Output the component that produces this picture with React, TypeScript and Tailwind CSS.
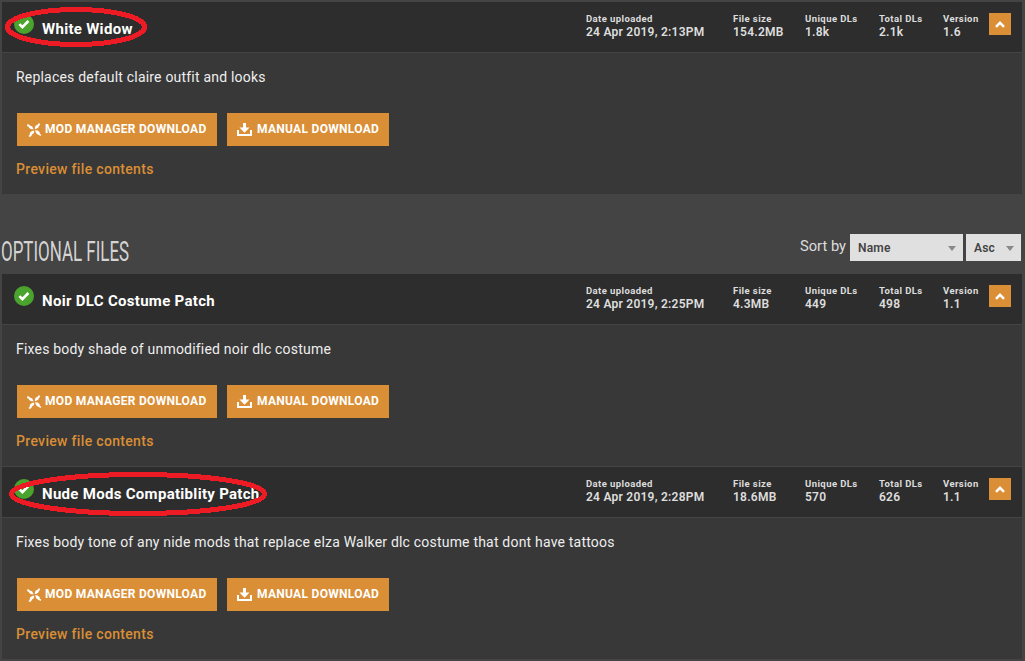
import React from "react";

interface ModFile {
	name: string;
	description: string;
	date: string;
	size: string;
	unique: string;
	total: string;
	version: string;
}

const mainFile: ModFile = {
	name: "White Widow",
	description: "Replaces default claire outfit and looks",
	date: "24 Apr 2019, 2:13PM",
	size: "154.2MB",
	unique: "1.8k",
	total: "2.1k",
	version: "1.6",
};

const optionalFiles: ModFile[] = [
	{
		name: "Noir DLC Costume Patch",
		description: "Fixes body shade of unmodified noir dlc costume",
		date: "24 Apr 2019, 2:25PM",
		size: "4.3MB",
		unique: "449",
		total: "498",
		version: "1.1",
	},
	{
		name: "Nude Mods Compatiblity Patch",
		description:
			"Fixes body tone of any nide mods that replace elza Walker dlc costume that dont have tattoos",
		date: "24 Apr 2019, 2:28PM",
		size: "18.6MB",
		unique: "570",
		total: "626",
		version: "1.1",
	},
];

const CheckIcon = () => (
	<svg className="size-5 mt-3 shrink-0" viewBox="0 0 20 20">
		<circle cx="10" cy="10" r="10" fill="#4aa32c" />
		<path d="M5.4 10.2l3 3L14.4 7" fill="none" stroke="#fff" strokeWidth="2.6" />
	</svg>
);

const ManagerIcon = () => (
	<svg className="w-[14px] h-[14px]" viewBox="0 0 14 14" fill="#fff">
		<path d="M0 1.6L1.5 1.2 3.2 2.7 5 3.2 6.6 6.2 4.6 6.2 2.4 5.2 2 3.9 0.4 3.2z" />
		<path d="M11.9 0L13 0.9 12.6 2.6 11.8 3.2 11.2 4.8 8.4 6.3 7.6 5.2 8.8 2.4 10.6 1.8z" />
		<path d="M6.2 7.4L7.3 8.2 6.6 10.6 5 11.4 4.4 13 2.9 14 1.4 12.9 2.6 12 3 9.6 4.4 8.6z" />
		<path d="M8 7.2L10.6 7.4 12.6 9 12.7 10.4 14 11.4 13.8 12.9 11.6 12 9.4 10.6z" />
	</svg>
);

const DownloadIcon = () => (
	<svg className="w-[15px] h-[13px]" viewBox="0 0 15 13" fill="#fff">
		<path d="M6 0h3v4.6h3.5L7.5 9.8 2.5 4.6H6z" />
		<path d="M0 7h2v4h11V7h2v6H0z" />
	</svg>
);

const Stat = ({
	label,
	value,
	className,
}: {
	label: string;
	value: string;
	className: string;
}) => (
	<div className={`${className} shrink-0 whitespace-nowrap text-[#ddd]`}>
		<p className="mt-[10px] text-[9.5px] leading-[13px] font-bold tracking-[0.42px]">
			{label}
		</p>
		<p className="mt-px text-[12px] leading-[13px] font-semibold tracking-[0.24px]">
			{value}
		</p>
	</div>
);

const FileEntry = ({ file }: { file: ModFile }) => (
	<div>
		<div className="flex h-[50px] bg-[#2d2d2d] pl-3">
			<CheckIcon />
			<h3 className="ml-2 mt-4 grow whitespace-nowrap text-[15px] leading-[22px] font-bold tracking-[0.3px] text-white">
				{file.name}
			</h3>
			<Stat label="Date uploaded" value={file.date} className="w-[147px]" />
			<Stat label="File size" value={file.size} className="w-[72px]" />
			<Stat label="Unique DLs" value={file.unique} className="w-[74px]" />
			<Stat label="Total DLs" value={file.total} className="w-[64px]" />
			<Stat label="Version" value={file.version} className="w-[46px]" />
			<button className="mr-[11px] mt-[11px] flex size-[22px] shrink-0 items-center justify-center bg-[#da8e35]">
				<svg className="w-[10px] h-[7px]" viewBox="0 0 10 7">
					<path d="M1 5.8l4-4 4 4" fill="none" stroke="#fff" strokeWidth="2.5" />
				</svg>
			</button>
		</div>
		<div className="h-[142px] border-t border-[#444] bg-[#383838] pl-[14px] pt-[14px]">
			<p className="text-[14px] leading-5 tracking-[0.2px] text-[#eee]">
				{file.description}
			</p>
			<div className="ml-px mt-[26px] flex gap-[10px] text-[12px] font-bold tracking-[0.3px] text-white whitespace-nowrap">
				<button className="flex h-[33px] w-[200px] items-center gap-1 bg-[#da8e35] pl-[10px]">
					<ManagerIcon />
					<span className="mb-0.5">MOD MANAGER DOWNLOAD</span>
				</button>
				<button className="flex h-[33px] w-[162px] items-center gap-[5px] bg-[#da8e35] pl-[10px]">
					<DownloadIcon />
					<span className="mb-0.5">MANUAL DOWNLOAD</span>
				</button>
			</div>
			<a className="mt-[13px] block text-[14px] leading-5 font-medium tracking-[0.32px] text-[#da8e35]">
				Preview file contents
			</a>
		</div>
	</div>
);

const Select = ({ value, className }: { value: string; className: string }) => (
	<div
		className={`${className} flex h-[27px] items-center justify-between bg-[#e0e0e0] pl-2 pr-[7px] text-[12px] font-semibold tracking-[0.2px] text-[#444]`}
	>
		<span>{value}</span>
		<svg className="mt-px w-2 h-[5px]" viewBox="0 0 8 5">
			<path d="M0 0h8L4 5z" fill="#888" />
		</svg>
	</div>
);

const App = () => {
	return (
		<div className="relative h-[661px] overflow-hidden bg-[#444] pl-[2px] pr-[3px] pt-[2px] font-[Roboto,sans-serif]">
			<FileEntry file={mainFile} />

			<div className="flex h-20 items-start justify-between pt-[39px]">
				<h2 className="-ml-px mt-[3px] origin-left scale-x-[0.605] whitespace-nowrap text-[28px] leading-8 font-normal text-[#d4d4d4]">
					OPTIONAL FILES
				</h2>
				<div className="mr-px mt-px flex">
					<span className="mr-1 text-[14.7px] leading-6 text-[#ddd]">
						Sort by
					</span>
					<Select value="Name" className="w-[113px]" />
					<Select value="Asc" className="ml-[3px] w-[55px]" />
				</div>
			</div>

			<div className="flex flex-col gap-px">
				{optionalFiles.map((file) => (
					<FileEntry key={file.name} file={file} />
				))}
			</div>

			{/* hand-drawn highlights */}
			<svg
				className="absolute left-[5px] top-[6px] h-[42px] w-[143px]"
				viewBox="0 0 143 42"
				fill="none"
				shapeRendering="crispEdges"
			>
				<ellipse cx="71" cy="21" rx="68.5" ry="17.5" stroke="#ed1c24" strokeWidth="5" />
			</svg>
			<svg
				className="absolute left-[9px] top-[471px] h-[46px] w-[259px]"
				viewBox="0 0 259 46"
				fill="none"
				shapeRendering="crispEdges"
			>
				<ellipse cx="129" cy="23" rx="126.5" ry="19.5" stroke="#ed1c24" strokeWidth="5" />
			</svg>
		</div>
	);
};

export default App;
